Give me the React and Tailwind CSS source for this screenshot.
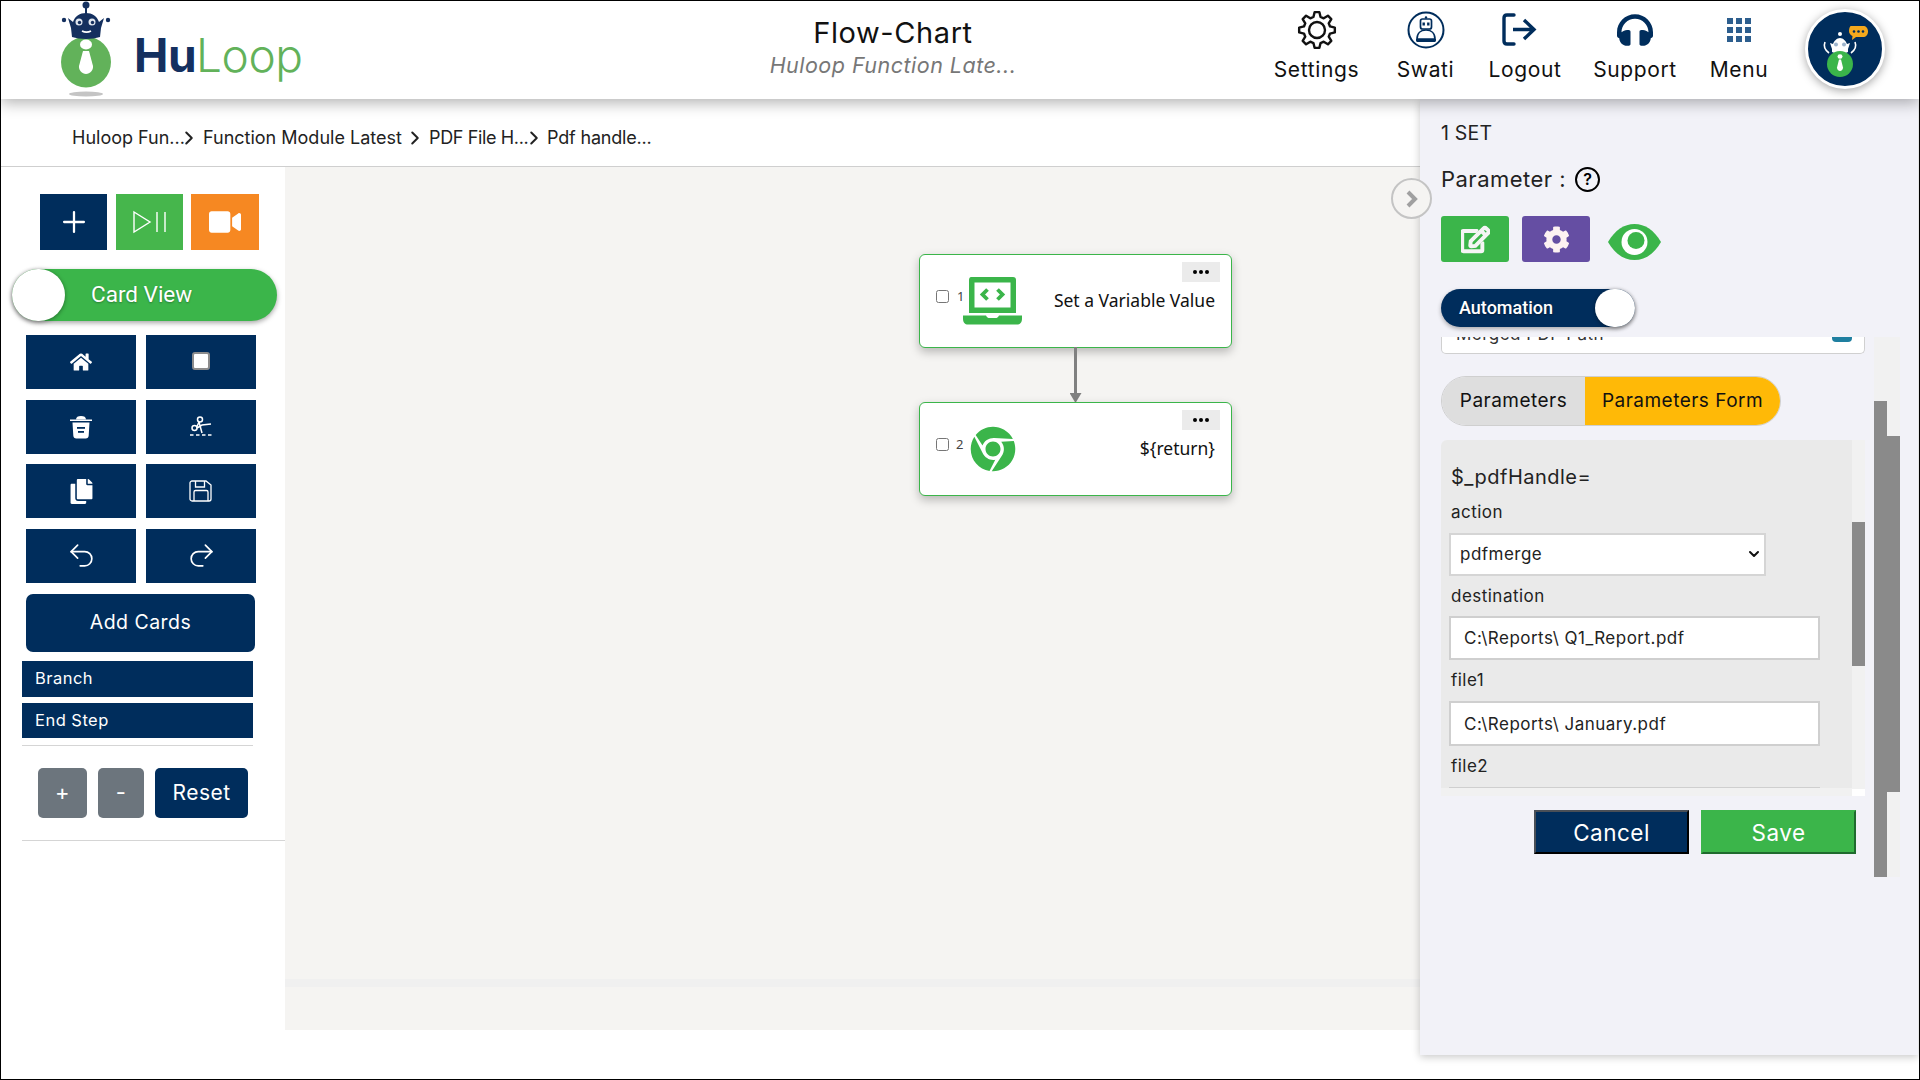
import React from "react";
import { Plus, Undo2, Redo2, ChevronRight, ChevronDown } from "lucide-react";
import { FaHome, FaVideo, FaCopy, FaRegEdit, FaCog, FaChrome, FaHeadphones } from "react-icons/fa";

const NAVY = "#002d5c";

function Logo() {
  return (
    <svg width="56" height="98" viewBox="0 0 56 98" className="shrink-0">
      <ellipse cx="28" cy="93" rx="17" ry="2.5" fill="#c4c4c4" />
      <ellipse cx="28" cy="61" rx="25" ry="25.5" fill="#62b25a" />
      <ellipse cx="28" cy="43.5" rx="6" ry="5" fill="#fff" />
      <path d="M25 50h6l4 15c.5 4-3 8-7 8s-7.500-4-7-8z" fill="#fff" />
      <rect x="27" y="5" width="2" height="8" fill="#14305f" />
      <circle cx="28" cy="4" r="3.500" fill="#14305f" />
      <path d="M10 17l5 4c2-6 7-9 13-9s11 3 13 9l5-4-3 10-1 9c-8 2.500-20 2.500-28 0l-1-9z" fill="#14305f" />
      <circle cx="6" cy="19" r="2.200" fill="#14305f" />
      <circle cx="50" cy="19" r="2.200" fill="#14305f" />
      <circle cx="21" cy="21" r="3.500" fill="#dfe6ef" />
      <circle cx="34" cy="21" r="3.500" fill="#dfe6ef" />
      <circle cx="21.500" cy="21.500" r="1.700" fill="#14305f" />
      <circle cx="34.500" cy="21.500" r="1.700" fill="#14305f" />
      <path d="M24 30c3 1.500 6 1.500 9 0" stroke="#fff" strokeWidth="1.800" fill="none" />
    </svg>
  );
}

function AvatarArt() {
  return (
    <svg width="74" height="74" viewBox="3 3 74 74">
      <path d="M46 17h12c3 0 5 2 5 5.500S61 28 58 28h-7l-4 3 .5-4c-2-1-3.500-2.500-3.500-5 0-3 1-5 2-5z" fill="#f5a91d" />
      <circle cx="49" cy="22.500" r="1.300" fill={NAVY} />
      <circle cx="53.500" cy="22.500" r="1.300" fill={NAVY} />
      <circle cx="58" cy="22.500" r="1.300" fill={NAVY} />
      <circle cx="35" cy="25" r="2" fill="#fff" />
      <path d="M25 34l3 1c1-3 4-6 7-6s6 3 7 6l3-1-2 6v3c-5 2-11 2-16 0v-3z" fill="#fff" />
      <circle cx="31" cy="35.500" r="2" fill="#9db4cc" />
      <circle cx="39" cy="35.500" r="2" fill="#9db4cc" />
      <path d="M20 33c-2 5 0 8 4 11M50 33c2 5 0 8-4 11" stroke="#fff" strokeWidth="1.600" fill="none" />
      <circle cx="35" cy="55" r="13" fill="#3bb54a" />
      <ellipse cx="35" cy="47.500" rx="2.500" ry="2.200" fill="#fff" />
      <path d="M34 50.500h2l2 8c0 2-1.500 3.500-3 3.500s-3-1.500-3-3.500z" fill="#fff" />
    </svg>
  );
}

function gearPath(cx, cy, rOut, rIn, n) {
  const pts = [];
  const step = (Math.PI * 2) / n;
  for (let i = 0; i < n; i++) {
    const a = -Math.PI / 2 + i * step;
    const p = (r, d) => [cx + r * Math.cos(a + d * step), cy + r * Math.sin(a + d * step)];
    pts.push(p(rIn, -0.34), p(rOut, -0.17), p(rOut, 0.17), p(rIn, 0.34));
  }
  return "M" + pts.map((q) => q[0].toFixed(2) + " " + q[1].toFixed(2)).join("L") + "Z";
}

function GearIcon() {
  return (
    <svg width="40" height="40" viewBox="0 0 40 40" fill="none" stroke="#111" strokeWidth="2.400" strokeLinejoin="round">
      <path d={gearPath(20, 20, 18, 13.5, 8)} />
      <circle cx="20" cy="20" r="8" />
    </svg>
  );
}

function SwatiIcon() {
  return (
    <svg width="38" height="38" viewBox="0 0 38 38" fill="none">
      <ellipse cx="19" cy="19" rx="17.500" ry="17.500" stroke={NAVY} strokeWidth="2" />
      <circle cx="19" cy="6.500" r="1.200" fill={NAVY} />
      <rect x="13.500" y="8" width="11" height="10" rx="2" stroke={NAVY} strokeWidth="1.700" />
      <rect x="15.500" y="11.500" width="2.400" height="3" fill={NAVY} />
      <rect x="20.100" y="11.500" width="2.400" height="3" fill={NAVY} />
      <path d="M10 28c0-6 4-9 9-9s9 3 9 9z" stroke={NAVY} strokeWidth="1.700" />
      <path d="M9 28h20v1.500c0 1-1 1.500-2 1.500H11c-1 0-2-.5-2-1.500z" fill={NAVY} />
    </svg>
  );
}

function LogoutIcon() {
  return (
    <svg width="36" height="33" viewBox="0 0 36 33" fill="none" stroke={NAVY} strokeWidth="3.400" className="-translate-x-[6px]">
      <path d="M13 2H6C4 2 3 3 3 5v23c0 2 1 3 3 3h7" strokeLinecap="round" />
      <path d="M12 16.500h20M23 7l10 9.500L23 26" strokeLinejoin="miter" />
    </svg>
  );
}

function MenuIcon() {
  return (
    <div className="grid grid-cols-3 gap-[3px]">
      {[0, 1, 2, 3, 4, 5, 6, 7, 8].map((i) => (
        <div key={i} className="w-[6px] h-[6px] bg-[#2d5e8e]" />
      ))}
    </div>
  );
}

function NavItem({ w, label, children }) {
  return (
    <div className={`flex flex-col items-center ${w}`}>
      <div className="h-[49px] flex items-center justify-center">{children}</div>
      <div className="mt-[2px] text-[21px] leading-[28px] text-[#111] whitespace-nowrap tracking-[0.03em]">{label}</div>
    </div>
  );
}

function PlayPause() {
  return (
    <svg width="36" height="24" viewBox="0 0 36 24" fill="none" stroke="#fff" strokeWidth="1.400">
      <path d="M2 2l16 10L2 22z" />
      <path d="M25 2v20M33 2v20" />
    </svg>
  );
}

function Trash() {
  return (
    <svg width="22" height="24" viewBox="0 0 22 24" fill="#fff">
      <rect x="0" y="4.500" width="22" height="1.500" />
      <path d="M6 4.500C6 2 8 1 11 1s5 1 5 3.500z" />
      <path d="M2.500 7.500h17l-.8 13c-.1 2-1.200 3-3 3H6.300c-1.800 0-2.900-1-3-3z" />
      <rect x="7" y="12" width="8" height="1.800" fill={NAVY} />
      <rect x="8" y="16" width="6" height="1.800" fill={NAVY} />
    </svg>
  );
}

function Cut() {
  return (
    <svg width="24" height="22" viewBox="0 0 24 22" fill="none" stroke="#fff" strokeWidth="1.500">
      <circle cx="11" cy="3.500" r="2.500" />
      <circle cx="5.500" cy="12" r="2.500" />
      <path d="M10 6l-2 4.500M8 12l5-3 9-1M10 6l3 11" />
      <path d="M1 19h22" strokeDasharray="3.500 2.500" strokeWidth="1.500" />
    </svg>
  );
}

function SaveIcon() {
  return (
    <svg width="24" height="24" viewBox="0 0 24 24" fill="none" stroke="#fff" strokeWidth="1.300">
      <path d="M3 2h14l5 4v14c0 1-1 2-2 2H3c-1 0-2-1-2-2V4c0-1 1-2 2-2z" />
      <path d="M6.500 2v6h9V2M5 22v-9c0-1 .5-1.500 1.500-1.500h11c1 0 1.500.5 1.500 1.500v9" />
    </svg>
  );
}

function Laptop() {
  return (
    <svg width="59" height="48" viewBox="0 0 59 48">
      <path d="M8 0h42c2 0 3 1 3 3v33H6V3c0-2 1-3 2-3z" fill="#3bb54a" />
      <rect x="11.500" y="5.500" width="36" height="25" fill="#fff" />
      <path d="M24.500 12.500l-5 5 5 5M34.500 12.500l5 5-5 5" fill="none" stroke="#3bb54a" strokeWidth="3.800" />
      <path d="M0 38.500h23c1 2 2 2.500 3.500 2.500h6c1.500 0 2.500-.5 3.500-2.500h23v3c0 4-2 6-5 6H5c-3 0-5-2-5-6z" fill="#3bb54a" />
    </svg>
  );
}

function Eye() {
  return (
    <svg width="53" height="36" viewBox="0 0 53 36">
      <path d="M0 18C7 6 16 0 26.500 0S46 6 53 18C46 30 37 36 26.500 36S7 30 0 18z" fill="#3bb54a" />
      <circle cx="26.500" cy="18" r="13" fill="#fff" />
      <circle cx="28" cy="16.500" r="8.500" fill="#3bb54a" />
    </svg>
  );
}

function DarkBtn({ children }) {
  return <div className="w-[110px] h-[54px] bg-[#002d5c] flex items-center justify-center">{children}</div>;
}

function Card({ n, top, icon, title, numMl, iconMl }) {
  return (
    <div className={`absolute left-[634px] ${top} w-[313px] h-[94px] bg-white border border-[#3bb54a] rounded-[6px] shadow-[0_4px_10px_rgba(0,0,0,0.25)] flex items-center pl-[16px] pr-[16px]`}>
      <div className="absolute top-[7px] right-[11px] w-[38px] h-[20px] bg-[#ebebeb] flex items-center justify-center gap-[2px]">
        <span className="w-[4px] h-[4px] rounded-full bg-black" />
        <span className="w-[4px] h-[4px] rounded-full bg-black" />
        <span className="w-[4px] h-[4px] rounded-full bg-black" />
      </div>
      <input type="checkbox" readOnly className="w-[13px] h-[13px] -mt-[10px] m-0" />
      <span className={`text-[13px] text-[#444] -mt-[9px] ${numMl}`} style={{ fontFamily: "'Noto Sans', sans-serif" }}>{n}</span>
      <div className={iconMl}>{icon}</div>
      <div className="flex-1 text-right text-[17.500px] text-[#111] tracking-normal -mt-[2px]" style={{ fontFamily: "'Noto Sans', sans-serif" }}>{title}</div>
    </div>
  );
}

function Field({ label, value, mt = "mt-[8px]", inMt = "mt-[9px]", h = "h-[44px]" }) {
  return (
    <>
      <div className={`${mt} h-[24px] leading-[24px] pl-[2px] text-[17px] text-[#222]`}>{label}</div>
      <input readOnly value={value} className={`${inMt} block w-[371px] ${h} bg-white border-2 border-[#cfcfcf] pl-[13px] text-[17px] text-[#222] outline-none shrink-0`} />
    </>
  );
}

function Track({ mt, h }) {
  return (
    <div className="w-[13px] h-full bg-[#f1f1f1]">
      <div className={`${mt} ${h} bg-[#8a8a8a]`} />
    </div>
  );
}

export default function App() {
  return (
    <div
      className="w-[1920px] h-[1080px] border border-black bg-white flex flex-col overflow-hidden tracking-[0.03em] text-[#111]"
      style={{ fontFamily: "Inter, 'Noto Sans', sans-serif" }}
    >
      {/* header */}
      <header className="relative z-20 h-[98px] shrink-0 bg-white flex items-start shadow-[0_4px_14px_rgba(0,0,0,0.3)]">
        <div className="w-[520px] h-full flex items-start pl-[57px]">
          <Logo />
          <div className="ml-[20px] mt-[24px] text-[46px] leading-[60px] tracking-[-0.01em]">
            <span className="font-bold text-[#14305f]">Hu</span>
            <span className="font-light text-[#62b25a]">Loop</span>
          </div>
        </div>
        <div className="w-[744px] flex flex-col items-center pt-[13px]">
          <div className="text-[29px] leading-[38px] text-[#111] tracking-[0.02em]">Flow-Chart</div>
          <div className="-mt-[2px] text-[21.500px] leading-[30px] italic text-[#777]">Huloop Function Late...</div>
        </div>
        <nav className="ml-[8px] flex gap-[36px] pt-[4px]">
          <NavItem w="w-[87px]" label="Settings"><GearIcon /></NavItem>
          <NavItem w="w-[59px]" label="Swati"><SwatiIcon /></NavItem>
          <NavItem w="w-[68px]" label="Logout"><LogoutIcon /></NavItem>
          <NavItem w="w-[80px]" label="Support"><FaHeadphones size={36} color={NAVY} /></NavItem>
          <NavItem w="w-[56px]" label="Menu"><MenuIcon /></NavItem>
        </nav>
        <div className="ml-[38px] mt-[8px] w-[80px] h-[80px] rounded-full border-[3px] border-white bg-[#002d5c] flex items-center justify-center shadow-[0_2px_10px_rgba(0,0,0,0.35)] overflow-hidden">
          <AvatarArt />
        </div>
      </header>

      {/* body */}
      <div className="flex flex-1 min-h-0 items-start">
        <div className="w-[1419px] shrink-0 flex flex-col">
          {/* breadcrumb */}
          <div className="h-[68px] border-b border-[#cfcfcf] flex items-center pl-[71px] pt-[10px] text-[18px] text-[#222] tracking-normal">
            <span className="w-[108px] whitespace-nowrap">Huloop Fun...</span>
            <ChevronRight size={22} color="#222" strokeWidth={2.2} className="-ml-[2px]" />
            <span className="w-[201px] ml-[3px] whitespace-nowrap">Function Module Latest</span>
            <ChevronRight size={22} color="#222" strokeWidth={2.2} />
            <span className="w-[92px] ml-[3px] whitespace-nowrap tracking-[-0.02em]">PDF File H...</span>
            <ChevronRight size={22} color="#222" strokeWidth={2.2} className="ml-[2px]" />
            <span className="ml-[2px] whitespace-nowrap tracking-[-0.01em]">Pdf handle...</span>
          </div>

          <div className="flex h-[863px]">
            {/* sidebar */}
            <aside className="w-[284px] shrink-0 bg-white flex flex-col">
              <div className="mt-[27px] ml-[39px] flex">
                <div className="w-[67px] h-[56px] bg-[#002d5c] flex items-center justify-center"><Plus size={34} color="#fff" strokeWidth={1.6} /></div>
                <div className="ml-[9px] w-[67px] h-[56px] bg-[#46b64c] flex items-center justify-center"><PlayPause /></div>
                <div className="ml-[8px] w-[68px] h-[56px] bg-[#f68822] flex items-center justify-center"><FaVideo size={32} color="#fff" /></div>
              </div>
              <div className="mt-[19px] ml-[11px] w-[265px] h-[52px] rounded-full bg-[#3bb54a] flex items-center shadow-[0_2px_5px_rgba(0,0,0,0.35)]">
                <div className="w-[53px] h-[52px] rounded-full bg-white shadow-[0_1px_4px_rgba(0,0,0,0.4)]" />
                <span className="ml-[26px] text-[22.500px] text-white tracking-normal [text-shadow:0_1px_2px_rgba(0,0,0,0.3)]" style={{ fontFamily: "Roboto, sans-serif" }}>Card View</span>
              </div>
              <div className="mt-[14px] ml-[25px] grid grid-cols-[110px_110px] gap-x-[10px] gap-y-[10.500px]">
                <DarkBtn><FaHome size={22} color="#fff" /></DarkBtn>
                <DarkBtn><div className="w-[18px] h-[18px] -mt-[2px] rounded-[3px] bg-white border-2 border-[#8c8c8c]" /></DarkBtn>
                <DarkBtn><Trash /></DarkBtn>
                <DarkBtn><Cut /></DarkBtn>
                <DarkBtn><FaCopy size={25} color="#fff" /></DarkBtn>
                <DarkBtn><SaveIcon /></DarkBtn>
                <DarkBtn><Undo2 size={31} color="#fff" strokeWidth={1.3} /></DarkBtn>
                <DarkBtn><Redo2 size={31} color="#fff" strokeWidth={1.3} /></DarkBtn>
              </div>
              <div className="mt-[11px] ml-[25px] w-[229px] h-[58px] pt-[1px] rounded-[7px] bg-[#002d5c] text-white text-[19.500px] flex items-center justify-center">Add Cards</div>
              <div className="mt-[9px] ml-[21px] w-[231px] h-[36px] bg-[#002d5c] text-white text-[16.500px] pl-[13px] flex items-center">Branch</div>
              <div className="mt-[6px] ml-[21px] w-[231px] h-[35px] bg-[#002d5c] text-white text-[16.500px] pl-[13px] flex items-center">End Step</div>
              <div className="mt-[7px] ml-[21px] w-[231px] h-px bg-[#d5d5d5]" />
              <div className="mt-[22px] ml-[37px] flex h-[50px]">
                <div className="w-[49px] bg-[#6c757d] rounded-[5px] text-white text-[22px] flex items-center justify-center">+</div>
                <div className="ml-[11px] w-[46px] bg-[#6c757d] rounded-[5px] text-white text-[22px] flex items-center justify-center">-</div>
                <div className="ml-[11px] w-[93px] bg-[#002d5c] rounded-[5px] text-white text-[21px] flex items-center justify-center">Reset</div>
              </div>
              <div className="mt-[22px] ml-[21px] w-[263px] h-px bg-[#d5d5d5]" />
            </aside>

            {/* canvas */}
            <main className="flex-1 flex flex-col bg-[#f5f4f2]">
              <div className="relative flex-1">
                <Card n="1" top="top-[87px]" title="Set a Variable Value" numMl="ml-[8px]" iconMl="-ml-[2px]" icon={<Laptop />} />
                <svg className="absolute left-[785px] top-[180px]" width="12" height="56" viewBox="0 0 12 56">
                  <rect x="4" y="0" width="3" height="48" fill="#808080" />
                  <path d="M-.5 46h12l-6 10z" fill="#808080" />
                </svg>
                <Card n="2" top="top-[235px]" title="${return}" numMl="ml-[7px]" iconMl="ml-[6px]" icon={<FaChrome size={46} color="#3bb54a" />} />
              </div>
              <div className="h-[8px] bg-[#f0f0f0]" />
              <div className="h-[43px]" />
            </main>
          </div>
        </div>

        {/* right panel */}
        <section className="relative z-10 w-[498px] shrink-0 h-[956px] bg-[#f2f2f8] pl-[21px] shadow-[0_2px_8px_rgba(0,0,0,0.22)]">
          <button className="absolute -left-[29px] top-[79px] w-[41px] h-[41px] rounded-full bg-[#f5f4f2] border-2 border-[#c4c4c4] flex items-center justify-center">
            <svg width="14" height="20" viewBox="0 0 14 20" fill="none" stroke="#a0a0a0" strokeWidth="4"><path d="M3 3l7 7-7 7" /></svg>
          </button>
          <div className="pt-[20px] h-[47px] text-[19.500px] leading-[28px] text-[#222] tracking-[0.01em]">1 SET</div>
          <div className="mt-[18px] h-[30px] flex items-center text-[22px] text-[#222]">
            Parameter :
            <span className="ml-[9px] w-[25px] h-[25px] rounded-full border-2 border-black flex items-center justify-center text-[16px] font-semibold tracking-normal text-black">?</span>
          </div>
          <div className="mt-[22px] flex items-center h-[46px]">
            <div className="w-[68px] h-[46px] rounded-[3px] bg-[#3bb54a] flex items-center justify-center"><FaRegEdit size={29} color="#f5f5f5" stroke="#f5f5f5" strokeWidth={30} /></div>
            <div className="ml-[13px] w-[68px] h-[46px] rounded-[3px] bg-[#654ea3] flex items-center justify-center"><FaCog size={27} color="#fdf2f2" /></div>
            <div className="ml-[18px] mt-[6px]"><Eye /></div>
          </div>
          <div className="mt-[27px] w-[194px] h-[38px] rounded-full bg-[#002d5c] flex items-center justify-between pl-[18px] shadow-[0_2px_4px_rgba(0,0,0,0.3)]">
            <span className="-mt-[2px] text-[18px] text-white font-medium tracking-normal [text-shadow:0_1px_2px_rgba(0,0,0,0.4)]" style={{ fontFamily: "Roboto, sans-serif" }}>Automation</span>
            <div className="w-[40px] h-[38px] rounded-full bg-white shadow-[0_1px_4px_rgba(0,0,0,0.4)]" />
          </div>

          <div className="mt-[10px] flex h-[540px]">
            <div className="w-[424px] flex flex-col">
              <div className="h-[459px] overflow-hidden">
                <div className="h-[17px] bg-white border border-t-0 border-[#d0d0d0] rounded-b-[5px] overflow-hidden relative pl-[14px]">
                  <div className="-mt-[15px] text-[17px] leading-[24px] text-[#333]">Merged PDF Path</div>
                  <div className="absolute right-[12px] top-0 w-[20px] h-[5px] bg-[#1f7fa0] rounded-b-[4px]" />
                </div>
                <div className="mt-[22px] w-[340px] h-[50px] rounded-full border border-[#cfcfcf] overflow-hidden flex text-[19px] text-[#111]">
                  <div className="w-[143px] bg-[#dedede] flex items-center justify-center">Parameters</div>
                  <div className="flex-1 bg-[#ffb907] flex items-center justify-center">Parameters Form</div>
                </div>
                <div className="mt-[14px] flex h-[356px]">
                  <div className="w-[411px] flex flex-col">
                    <div className="h-[348px] bg-[#eaeaea] rounded-tl-[6px] overflow-hidden pl-[8px] pt-[23px] flex flex-col">
                      <div className="h-[28px] leading-[28px] pl-[2px] text-[20px] text-[#222]">$_pdfHandle=</div>
                      <div className="mt-[9px] h-[24px] leading-[24px] pl-[2px] text-[17px] text-[#222]">action</div>
                      <div className="relative mt-[9px] w-[317px] h-[43px] shrink-0">
                        <select className="w-full h-full appearance-none bg-white border-2 border-[#d5d5d5] pl-[9px] text-[17px] text-[#222]" defaultValue="pdfmerge">
                          <option value="pdfmerge">pdfmerge</option>
                        </select>
                        <ChevronDown size={16} color="#111" strokeWidth={3} className="absolute right-[4px] top-[13px] pointer-events-none" />
                      </div>
                      <Field label="destination" mt="mt-[8px]" inMt="mt-[8px]" value="C:\Reports\ Q1_Report.pdf" />
                      <Field label="file1" value="C:\Reports\ January.pdf" h="h-[45px]" />
                      <div className="mt-[8px] h-[24px] leading-[24px] pl-[2px] text-[17px] text-[#222]">file2</div>
                      <div className="mt-[9px] w-[371px] h-[44px] bg-white border-2 border-[#cfcfcf] shrink-0" />
                    </div>
                    <div className="h-[8px] bg-[#f1f1f1]" />
                  </div>
                  <div className="w-[13px] flex flex-col">
                    <div className="h-[349px] bg-[#f1f1f1] overflow-hidden">
                      <div className="mt-[82px] h-[144px] bg-[#8a8a8a]" />
                    </div>
                    <div className="h-[7px] bg-white" />
                  </div>
                </div>
              </div>
              <div className="mt-[14px] ml-[93px] flex gap-[12px]">
                <button className="w-[155px] h-[44px] pt-[1px] bg-[#002d5c] text-white text-[22.500px] border-2 border-t-[#4a4f57] border-l-[#4a4f57] border-b-black border-r-black">Cancel</button>
                <button className="w-[155px] h-[44px] pt-[1px] bg-[#3bb54a] text-white text-[22.500px] border-2 border-t-[#3bb54a] border-l-[#3bb54a] border-b-[#1f6b2e] border-r-[#1f6b2e]">Save</button>
              </div>
            </div>
            <div className="ml-[9px] flex">
              <Track mt="mt-[64px]" h="h-[476px]" />
              <Track mt="mt-[99px]" h="h-[356px]" />
            </div>
          </div>
        </section>
      </div>
    </div>
  );
}
